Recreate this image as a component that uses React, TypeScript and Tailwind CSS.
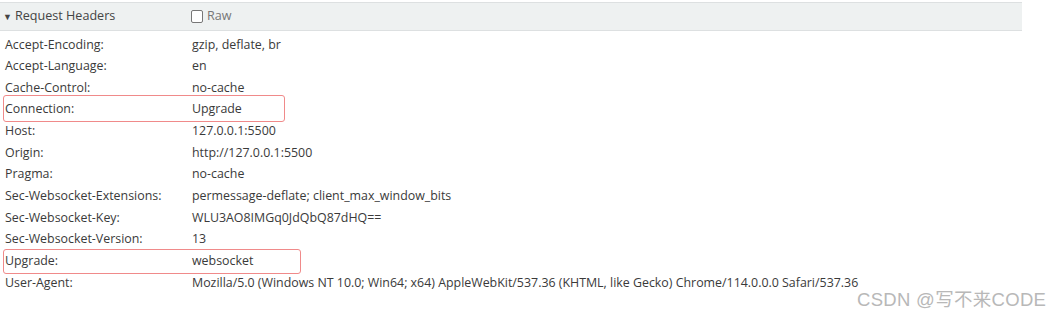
import React from 'react'

const headers: { name: string; value: string; box?: string }[] = [
  { name: 'Accept-Encoding:', value: 'gzip, deflate, br' },
  { name: 'Accept-Language:', value: 'en' },
  { name: 'Cache-Control:', value: 'no-cache' },
  { name: 'Connection:', value: 'Upgrade', box: 'w-[282px] -top-[4px] -bottom-[1px]' },
  { name: 'Host:', value: '127.0.0.1:5500' },
  { name: 'Origin:', value: 'http://127.0.0.1:5500' },
  { name: 'Pragma:', value: 'no-cache' },
  { name: 'Sec-Websocket-Extensions:', value: 'permessage-deflate; client_max_window_bits' },
  { name: 'Sec-Websocket-Key:', value: 'WLU3AO8IMGq0JdQbQ87dHQ==' },
  { name: 'Sec-Websocket-Version:', value: '13' },
  { name: 'Upgrade:', value: 'websocket', box: 'w-[298px] -top-[1px] -bottom-[2px]' },
  {
    name: 'User-Agent:',
    value:
      'Mozilla/5.0 (Windows NT 10.0; Win64; x64) AppleWebKit/537.36 (KHTML, like Gecko) Chrome/114.0.0.0 Safari/537.36',
  },
]

const App = () => {
  return (
    <div className="relative w-[1053px] h-[318px] bg-white text-[12.4px] text-[#3a3a3a] font-['Open_Sans',sans-serif] overflow-hidden">
      <div className="mt-[2px] w-[1022px] h-[29px] flex items-center bg-[#eef1f1] border-t border-b border-[#dde0e1]">
        <div className="w-[188px] flex items-center pl-[3px] text-[#444] text-[12.6px]">
          <span className="text-[9px] mr-[3px]">▼</span>
          Request Headers
        </div>
        <div className="flex items-center text-[#777] text-[12.6px]">
          <span className="w-[12px] h-[13px] border border-[#777] rounded-[2px] ml-[3px] mr-[4px] bg-white" />
          Raw
        </div>
      </div>

      <div className="pt-[3px]">
        {headers.map(({ name, value, box }) => (
          <div key={name} className="relative flex items-center h-[21.65px] whitespace-nowrap">
            {box && (
              <div className={`absolute left-[3px] ${box} border border-[#f08a8a] rounded-[3px]`} />
            )}
            <div className="w-[192px] pl-[5px]">{name}</div>
            <div>{value}</div>
          </div>
        ))}
      </div>

      <div className="absolute left-[857px] top-[286px] text-[18.5px] text-[#b8b8b8] font-['Liberation_Sans','Noto_Sans_CJK_SC',sans-serif] tracking-[0.3px]">
        CSDN @写不来CODE
      </div>
    </div>
  )
}

export default App
